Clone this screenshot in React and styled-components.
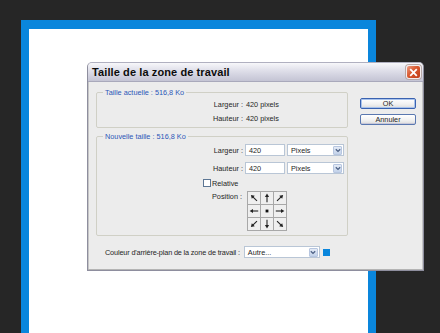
import React from 'react'
import styled, { createGlobalStyle } from 'styled-components'

const GlobalStyle = createGlobalStyle`
  html, body {
    margin: 0;
    padding: 0;
    background: #262626;
  }
  body {
    font-family: "Liberation Sans", Arial, sans-serif;
  }
`

const arrows = [-45, 0, 45, -90, null, 90, -135, 180, 135]

const Arrow = ({ angle }) => (
  <svg width="10" height="10" viewBox="0 0 10 10">
    {angle === null ? (
      <rect x="3.6" y="3.6" width="2.8" height="2.8" fill="#111" />
    ) : (
      <g transform={`rotate(${angle} 5 5)`}>
        <line x1="5" y1="9.2" x2="5" y2="3" stroke="#222" strokeWidth="1.1" />
        <polygon points="5,0.6 2.9,4 7.1,4" fill="#222" />
      </g>
    )}
  </svg>
)

const SelectBox = ({ value, width }) => (
  <Select width={width}>
    <SelectValue>{value}</SelectValue>
    <DropButton>
      <svg width="6" height="5" viewBox="0 0 6 5">
        <path d="M0.8 1.2 L3 3.4 L5.2 1.2" fill="none" stroke="#4d6185" strokeWidth="1.3" />
      </svg>
    </DropButton>
  </Select>
)

const App = () => {
  return (
    <Page>
      <GlobalStyle />
      <Canvas>
        <CanvasInner />
      </Canvas>
      <Dialog>
        <TitleBar>
          <Title>Taille de la zone de travail</Title>
          <CloseButton>
            <svg width="9" height="9" viewBox="0 0 9 9">
              <path d="M1.2 1.2 L7.8 7.8 M7.8 1.2 L1.2 7.8" stroke="#fff" strokeWidth="1.8" />
            </svg>
          </CloseButton>
        </TitleBar>
        <Body>
          <Main>
            <Group>
              <Legend>Taille actuelle : 516,8 Ko</Legend>
              <InfoRow>
                <Label>Largeur :</Label>
                <Value>420 pixels</Value>
              </InfoRow>
              <InfoRow>
                <Label>Hauteur :</Label>
                <Value>420 pixels</Value>
              </InfoRow>
            </Group>
            <Group $gap>
              <Legend>Nouvelle taille : 516,8 Ko</Legend>
              <FieldRow>
                <Label>Largeur :</Label>
                <Input>420</Input>
                <SelectBox value="Pixels" width={57} />
              </FieldRow>
              <FieldRow $second>
                <Label>Hauteur :</Label>
                <Input>420</Input>
                <SelectBox value="Pixels" width={57} />
              </FieldRow>
              <CheckRow>
                <Checkbox />
                <span>Relative</span>
              </CheckRow>
              <PositionRow>
                <Label $top>Position :</Label>
                <AnchorGrid>
                  {arrows.map((a, i) => (
                    <AnchorCell key={i}>
                      <Arrow angle={a} />
                    </AnchorCell>
                  ))}
                </AnchorGrid>
              </PositionRow>
            </Group>
            <BottomRow>
              <BottomLabel>Couleur d'arrière-plan de la zone de travail :</BottomLabel>
              <SelectBox value="Autre..." width={76} />
              <Swatch />
            </BottomRow>
          </Main>
          <Buttons>
            <Button $default>OK</Button>
            <Button>Annuler</Button>
          </Buttons>
        </Body>
      </Dialog>
    </Page>
  )
}

export default App

const Page = styled.div`
  position: relative;
  width: 440px;
  height: 333px;
  overflow: hidden;
  background: #262626;
  padding: 20px 0 0 21px;
  box-sizing: border-box;
`
const Canvas = styled.div`
  width: 355px;
  height: 330px;
  background: #0a86dc;
  padding: 9px 8px 0 8px;
  box-sizing: border-box;
`
const CanvasInner = styled.div`
  height: 100%;
  background: #ffffff;
`
const Dialog = styled.div`
  position: absolute;
  left: 87px;
  top: 62px;
  width: 337px;
  height: 209px;
  box-sizing: border-box;
  background: #ececec;
  border: 1px solid #8e8e9e;
  border-top-color: #b0b0c0;
  border-radius: 5px 5px 0 0;
  box-shadow: inset 0 -1px 0 #b4b4b4, inset 1px 0 0 #c6c6c6, inset -1px 0 0 #c6c6c6;
  color: #262626;
  font-size: 7.3px;
`
const TitleBar = styled.div`
  display: flex;
  align-items: center;
  justify-content: space-between;
  height: 18px;
  padding: 0 2px 0 4px;
  border-radius: 4px 4px 0 0;
  background: linear-gradient(#f7f7fa 0%, #e0e0ea 40%, #c4c4d4 100%);
  border-bottom: 1px solid #a9a9bb;
`
const Title = styled.div`
  font-size: 11px;
  font-weight: bold;
  color: #0c0c0c;
  letter-spacing: 0.1px;
`
const CloseButton = styled.div`
  display: flex;
  align-items: center;
  justify-content: center;
  width: 15px;
  height: 14px;
  box-sizing: border-box;
  border: 1px solid #f4eeee;
  border-radius: 3px;
  background: linear-gradient(135deg, #ec9a80 0%, #d8582f 45%, #c13d18 100%);
  box-shadow: 0 0 0 1px #b7a8a8;
`
const Body = styled.div`
  display: grid;
  grid-template-columns: 252px 56px;
  column-gap: 12px;
  padding: 6px 0 0 8px;
`
const Main = styled.div`
  display: flex;
  flex-direction: column;
`
const Group = styled.fieldset`
  margin: ${props => (props.$gap ? '4px' : '0')} 0 0 0;
  padding: 0 6px 2px 6px;
  border: 1px solid #d0d0c6;
  border-radius: 2px;
  min-width: 0;
`
const Legend = styled.legend`
  padding: 0 2px;
  color: #2c58b8;
  font-size: 7.3px;
  line-height: 9px;
`
const InfoRow = styled.div`
  display: grid;
  grid-template-columns: 140px auto;
  column-gap: 3px;
  height: 14px;
  align-items: center;
`
const Label = styled.span`
  text-align: right;
  align-self: ${props => (props.$top ? 'start' : 'center')};
  padding-top: ${props => (props.$top ? '1px' : '0')};
`
const Value = styled.span``
const FieldRow = styled.div`
  display: grid;
  grid-template-columns: 140px 40px 57px;
  column-gap: 2px;
  align-items: center;
  height: 12px;
  margin-top: ${props => (props.$second ? '6px' : '3px')};
`
const Input = styled.div`
  height: 12px;
  box-sizing: border-box;
  border: 1px solid #b9c6d6;
  background: #ffffff;
  padding: 0 3px;
  display: flex;
  align-items: center;
`
const Select = styled.div`
  display: flex;
  align-items: center;
  justify-content: space-between;
  width: ${props => props.width}px;
  height: 12px;
  box-sizing: border-box;
  border: 1px solid #b9c6d6;
  background: #ffffff;
  padding: 0 1px 0 3px;
`
const SelectValue = styled.span``
const DropButton = styled.div`
  display: flex;
  align-items: center;
  justify-content: center;
  width: 9px;
  height: 9px;
  border-radius: 1px;
  background: linear-gradient(#e4ebf6, #c3d2ea);
  border: 1px solid #b7c6e0;
  box-sizing: border-box;
`
const CheckRow = styled.label`
  display: flex;
  align-items: center;
  gap: 1px;
  height: 8px;
  margin: 5px 0 0 100px;
`
const Checkbox = styled.span`
  display: inline-block;
  width: 6px;
  height: 6px;
  border: 1px solid #5c7694;
  background: #ffffff;
`
const PositionRow = styled.div`
  display: grid;
  grid-template-columns: 139px auto;
  column-gap: 5px;
  margin-top: 4px;
  margin-bottom: 2px;
`
const AnchorGrid = styled.div`
  display: grid;
  grid-template-columns: repeat(3, 12px);
  grid-template-rows: repeat(3, 12px);
  gap: 1px;
  padding: 1px;
  width: max-content;
  background: #a8a8a8;
`
const AnchorCell = styled.div`
  display: flex;
  align-items: center;
  justify-content: center;
  background: #efefef;
`
const BottomRow = styled.div`
  display: flex;
  align-items: center;
  gap: 4px;
  margin-top: 10px;
  padding-left: 9px;
`
const BottomLabel = styled.span`
  letter-spacing: -0.15px;
`
const Swatch = styled.span`
  width: 7px;
  height: 7px;
  margin-left: -1px;
  background: #0a86dc;
`
const Buttons = styled.div`
  display: flex;
  flex-direction: column;
  gap: 5px;
  padding-top: 10px;
`
const Button = styled.div`
  display: flex;
  align-items: center;
  justify-content: center;
  height: 11px;
  box-sizing: border-box;
  border: 1px solid ${props => (props.$default ? '#3a62b0' : '#5a78b0')};
  border-radius: 2px;
  background: linear-gradient(#ffffff 0%, #f2f2f2 55%, #dcdcdc 100%);
  box-shadow: ${props => (props.$default ? 'inset 0 0 0 1px #a9c3ec' : 'inset 0 -1px 0 #c8c8d8')};
  font-size: 7.3px;
`
